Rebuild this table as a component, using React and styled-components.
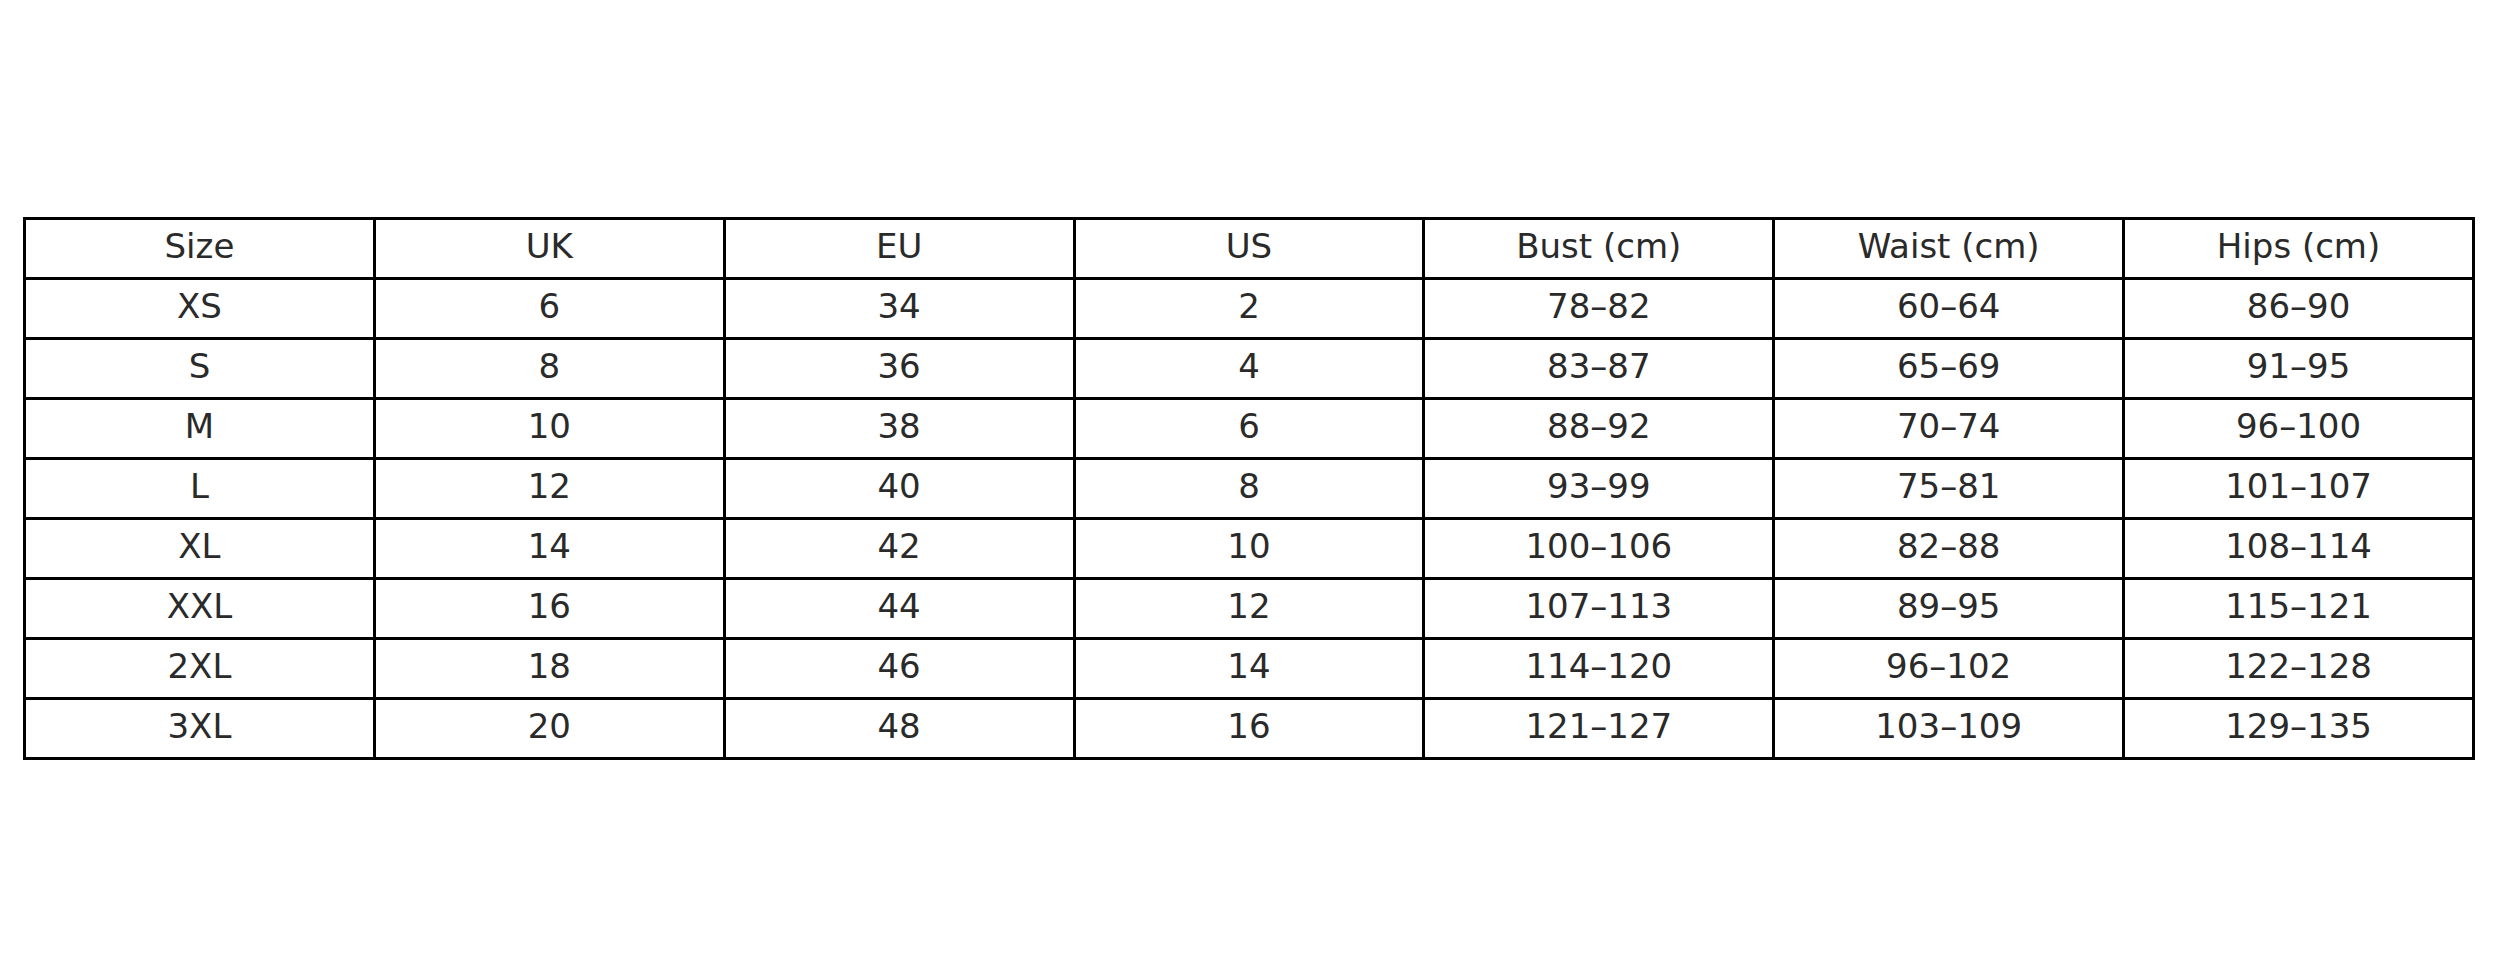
import styled, { createGlobalStyle } from 'styled-components';

const GlobalStyle = createGlobalStyle`
  html, body {
    margin: 0;
    padding: 0;
    background: #ffffff;
  }
`;

const Page = styled.div`
  width: 2500px;
  height: 977px;
  padding: 217px 0 0 23px;
  box-sizing: border-box;
  font-family: 'DejaVu Sans', 'Liberation Sans', sans-serif;
`;

const Table = styled.table`
  border-collapse: collapse;
  table-layout: fixed;
  width: 2452px;
`;

const Cell = styled.td`
  border: 3px solid #000000;
  height: 60px;
  padding: 0 0 5px 0;
  box-sizing: border-box;
  text-align: center;
  vertical-align: middle;
  font-size: 34px;
  color: #2a2a2a;
  white-space: nowrap;
`;

const header = ['Size', 'UK', 'EU', 'US', 'Bust (cm)', 'Waist (cm)', 'Hips (cm)'];

const rows = [
  ['XS', '6', '34', '2', '78–82', '60–64', '86–90'],
  ['S', '8', '36', '4', '83–87', '65–69', '91–95'],
  ['M', '10', '38', '6', '88–92', '70–74', '96–100'],
  ['L', '12', '40', '8', '93–99', '75–81', '101–107'],
  ['XL', '14', '42', '10', '100–106', '82–88', '108–114'],
  ['XXL', '16', '44', '12', '107–113', '89–95', '115–121'],
  ['2XL', '18', '46', '14', '114–120', '96–102', '122–128'],
  ['3XL', '20', '48', '16', '121–127', '103–109', '129–135'],
];

export default function App() {
  return (
    <>
      <GlobalStyle />
      <Page>
        <Table>
          <tbody>
            {[header, ...rows].map((row, i) => (
              <tr key={i}>
                {row.map((v, j) => (
                  <Cell key={j}>{v}</Cell>
                ))}
              </tr>
            ))}
          </tbody>
        </Table>
      </Page>
    </>
  );
}
